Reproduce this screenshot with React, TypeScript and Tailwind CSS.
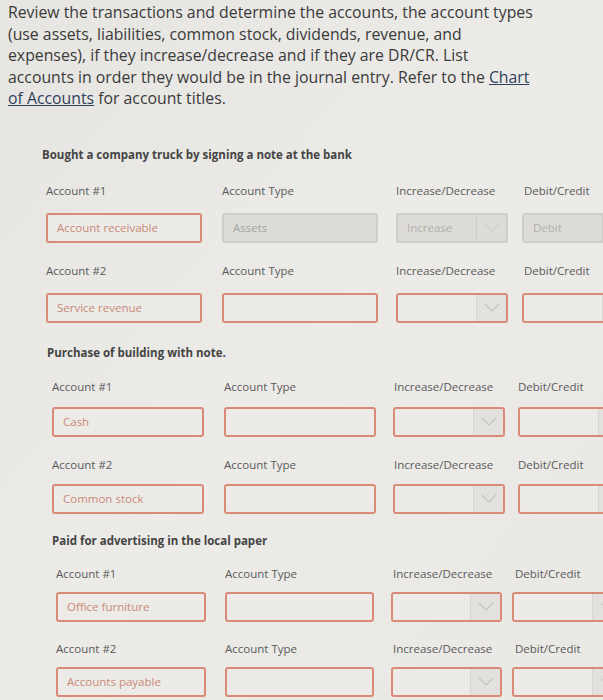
import React from 'react';

type Row = {
  label: string;
  value: string;
  filled?: { type: string; incDec: string; dc: string };
  labelTop: string;
  inputTop: string;
};

type Cols = {
  pad: string;
  titleShift: string;
  labels: [string, string, string];
  acct: string;
  type: string;
  inc: string;
};

type Section = {
  title: string;
  titleTop: string;
  cols: Cols;
  rows: Row[];
};

const sections: Section[] = [
  {
    title: 'Bought a company truck by signing a note at the bank',
    titleTop: 'mt-[37px]',
    cols: {
      pad: 'pl-[46px]',
      titleShift: '-ml-[4px]',
      labels: ['w-[176px]', 'w-[174px]', 'w-[128px]'],
      acct: 'w-[156px] mr-[20px]',
      type: 'w-[156px] mr-[18px]',
      inc: 'w-[112px] mr-[14px]',
    },
    rows: [
      {
        label: 'Account #1',
        value: 'Account receivable',
        filled: { type: 'Assets', incDec: 'Increase', dc: 'Debit' },
        labelTop: 'mt-[20px]',
        inputTop: 'mt-[14px]',
      },
      { label: 'Account #2', value: 'Service revenue', labelTop: 'mt-[20px]', inputTop: 'mt-[14px]' },
    ],
  },
  {
    title: 'Purchase of building with note.',
    titleTop: 'mt-[22px]',
    cols: {
      pad: 'pl-[52px]',
      titleShift: '-ml-[5px]',
      labels: ['w-[172px]', 'w-[170px]', 'w-[124px]'],
      acct: 'w-[152px] mr-[20px]',
      type: 'w-[152px] mr-[17px]',
      inc: 'w-[112px] mr-[13px]',
    },
    rows: [
      { label: 'Account #1', value: 'Cash', labelTop: 'mt-[18px]', inputTop: 'mt-[12px]' },
      { label: 'Account #2', value: 'Common stock', labelTop: 'mt-[20px]', inputTop: 'mt-[11px]' },
    ],
  },
  {
    title: 'Paid for advertising in the local paper',
    titleTop: 'mt-[19px]',
    cols: {
      pad: 'pl-[56px]',
      titleShift: '-ml-[4px]',
      labels: ['w-[169px]', 'w-[168px]', 'w-[122px]'],
      acct: 'w-[150px] mr-[19px]',
      type: 'w-[149px] mr-[17px]',
      inc: 'w-[111px] mr-[10px]',
    },
    rows: [
      { label: 'Account #1', value: 'Office furniture', labelTop: 'mt-[17px]', inputTop: 'mt-[10px]' },
      { label: 'Account #2', value: 'Accounts payable', labelTop: 'mt-[19px]', inputTop: 'mt-[10px]' },
    ],
  },
];

const Chevron = ({ light }: { light?: boolean }) => (
  <svg width="16" height="9" viewBox="0 0 16 9" fill="none">
    <path d="M1 1l7 7 7-7" stroke={light ? '#cfcfcd' : '#c4c4c2'} strokeWidth="1.2" />
  </svg>
);

const Box = ({ w, text, disabled }: { w: string; text?: string; disabled?: boolean }) => (
  <div
    className={`${w} h-[30px] shrink-0 rounded-[3px] flex items-center px-[9px] text-[11.5px] ${
      disabled
        ? 'border-2 border-[#cfcecb] bg-[#dddcd9] text-[#a3a3a1]'
        : 'border-2 border-[#d98b78] bg-[#ecebe8] text-[#c98a77]'
    }`}
  >
    {text}
  </div>
);

const Select = ({ w, text, disabled }: { w: string; text?: string; disabled?: boolean }) => (
  <div
    className={`${w} h-[30px] shrink-0 rounded-[3px] flex overflow-hidden ${
      disabled ? 'border-2 border-[#cfcecb] bg-[#dddcd9]' : 'border-2 border-[#d98b78] bg-[#ecebe8]'
    }`}
  >
    <div className="flex-1 flex items-center px-[9px] text-[11.5px] text-[#b0b0ae]">{text}</div>
    <div
      className={`w-[30px] flex items-center justify-center border-l ${
        disabled ? 'border-[#cfcecb] bg-[#dddcd9]' : 'border-[#d6d5d2] bg-[#e2e1de]'
      }`}
    >
      <Chevron light={disabled} />
    </div>
  </div>
);

export default function App() {
  return (
    <div
      className="w-[603px] h-[700px] overflow-hidden bg-gradient-to-br from-[#e6e5e2] via-[#ecebe8] to-[#e9e8e5] pt-[2px]"
      style={{ fontFamily: '"Open Sans", "Noto Sans", sans-serif' }}
    >
      <p className="pl-[8px] text-[15.8px] leading-[21.5px] text-[#3a3a3a] whitespace-nowrap">
        Review the transactions and determine the accounts, the account types
        <br />
        (use assets, liabilities, common stock, dividends, revenue, and
        <br />
        expenses), if they increase/decrease and if they are DR/CR. List
        <br />
        accounts in order they would be in the journal entry. Refer to the{' '}
        <span className="text-[#2f3f5c] underline">Chart</span>
        <br />
        <span className="text-[#2f3f5c] underline">of Accounts</span> for account titles.
      </p>

      {sections.map((s) => (
        <div key={s.title} className={s.cols.pad}>
          <h3 className={`${s.titleTop} ${s.cols.titleShift} text-[11.5px] leading-[16px] font-bold text-[#444444]`}>
            {s.title}
          </h3>
          {s.rows.map((r) => (
            <div key={r.label + r.value}>
              <div className={`${r.labelTop} flex whitespace-nowrap text-[11.5px] leading-[16px] text-[#5a5a5a]`}>
                <span className={`${s.cols.labels[0]} shrink-0`}>{r.label}</span>
                <span className={`${s.cols.labels[1]} shrink-0`}>Account Type</span>
                <span className={`${s.cols.labels[2]} shrink-0`}>Increase/Decrease</span>
                <span>Debit/Credit</span>
              </div>
              <div className={`${r.inputTop} flex whitespace-nowrap`}>
                <Box w={s.cols.acct} text={r.value} />
                <Box w={s.cols.type} text={r.filled?.type} disabled={!!r.filled} />
                <Select w={s.cols.inc} text={r.filled?.incDec} disabled={!!r.filled} />
                <Select w="w-[112px]" text={r.filled?.dc} disabled={!!r.filled} />
              </div>
            </div>
          ))}
        </div>
      ))}
    </div>
  );
}
